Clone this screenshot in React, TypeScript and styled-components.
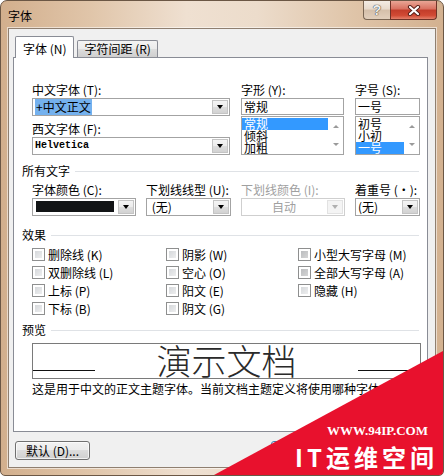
import styled, { createGlobalStyle } from "styled-components";

const GlobalStyle = createGlobalStyle`
  html, body { margin: 0; padding: 0; background: #fff; }
  body {
    font-family: "Noto Sans CJK SC", "Noto Sans", sans-serif;
    font-size: 12px;
    color: #000;
  }
  * { box-sizing: border-box; }
`;

const Window = styled.div`
  position: relative;
  width: 444px;
  height: 476px;
  border: 1px solid #6b5745;
  border-radius: 7px 7px 5px 5px;
  background: linear-gradient(90deg, #d2af8d 0%, #e0c5a9 20%, #efe0d1 42%, #ecdccb 58%, #dfc4a8 80%, #d3b190 100%);
  display: flex;
  flex-direction: column;
  overflow: hidden;
`;

const TitleBar = styled.div`
  height: 27px;
  display: flex;
  align-items: flex-start;
  padding: 0 6px 0 7px;
`;

const Title = styled.div`
  margin-top: 8px;
  line-height: 14px;
`;

const CaptionButtons = styled.div`
  margin-left: auto;
  display: flex;
`;

const HelpButton = styled.div`
  width: 27px;
  height: 19px;
  border: 1px solid #7a6654;
  border-top: none;
  border-right: none;
  border-radius: 0 0 0 4px;
  background: linear-gradient(#f4ece4 0%, #e8dacc 45%, #d5bfaa 50%, #e2cfbc 100%);
  display: flex;
  align-items: center;
  justify-content: center;
  font-family: "Liberation Sans", sans-serif;
  font-weight: bold;
  font-size: 14px;
  color: #eee;
  text-shadow: 0 0 1px #333, 0 0 1px #333;
`;

const CloseButton = styled.div`
  width: 47px;
  height: 19px;
  border: 1px solid #6e3328;
  border-top: none;
  border-radius: 0 0 4px 0;
  background: linear-gradient(#e9a595 0%, #d8705f 45%, #c23c2a 50%, #d14a34 80%, #e4806a 100%);
  display: flex;
  align-items: center;
  justify-content: center;
`;

const Client = styled.div`
  flex: 1;
  margin: 0 7px 7px;
  background: #f0f0f0;
  border: 1px solid #8f7f70;
  box-shadow: 0 0 0 1px rgba(255, 255, 255, 0.55);
  padding: 7px 7px 0 4px;
  display: flex;
  flex-direction: column;
`;

const TabStrip = styled.div`
  height: 21px;
  display: flex;
  align-items: flex-end;
  padding-left: 2px;
  position: relative;
  z-index: 1;
`;

const Tab = styled.div<{ $active?: boolean }>`
  height: ${(p) => (p.$active ? 22 : 17)}px;
  margin-bottom: ${(p) => (p.$active ? -1 : 0)}px;
  margin-left: ${(p) => (p.$active ? 0 : 3)}px;
  padding: ${(p) => (p.$active ? "4px 7px 0" : "1px 6px 0")};
  line-height: ${(p) => (p.$active ? 15 : 14)}px;
  border: 1px solid #898c95;
  border-bottom: none;
  border-radius: 2px 2px 0 0;
  background: ${(p) =>
    p.$active ? "#fff" : "linear-gradient(#f3f3f3, #ebebeb 50%, #dddddd 50%, #cfcfcf)"};
  white-space: nowrap;
`;

const Panel = styled.div`
  height: 375px;
  background: #fff;
  border: 1px solid #898c95;
  padding: 24px 6px 0 8px;
`;

const Indent = styled.div<{ $top?: number }>`
  margin-left: 10px;
  margin-top: ${(p) => p.$top ?? 0}px;
`;

const FontGrid = styled.div`
  display: grid;
  grid-template-columns: 198px 103px 65px;
  column-gap: 11px;
`;

const Column = styled.div`
  display: flex;
  flex-direction: column;
`;

const Label = styled.div<{ $disabled?: boolean; $top?: number }>`
  height: 15px;
  line-height: 15px;
  margin-bottom: 1px;
  margin-top: ${(p) => p.$top ?? 0}px;
  white-space: nowrap;
  color: ${(p) => (p.$disabled ? "#a0a0a0" : "#000")};
`;

const Combo = styled.div<{ $disabled?: boolean }>`
  height: 18px;
  border: 1px solid ${(p) => (p.$disabled ? "#cfcfcf" : "#a3a3a3")};
  background: #fff;
  display: flex;
  align-items: stretch;
`;

const ComboText = styled.div<{ $disabled?: boolean; $center?: boolean; $mono?: boolean }>`
  flex: 1;
  padding-left: ${(p) => (p.$center ? 0 : 2)}px;
  line-height: 16px;
  overflow: hidden;
  white-space: nowrap;
  text-align: ${(p) => (p.$center ? "center" : "left")};
  color: ${(p) => (p.$disabled ? "#a0a0a0" : "#000")};
  font-family: ${(p) => (p.$mono ? '"Liberation Mono", monospace' : "inherit")};
  font-size: ${(p) => (p.$mono ? 10 : 12)}px;
  font-weight: ${(p) => (p.$mono ? "bold" : "normal")};
`;

const Selected = styled.span`
  background: #74b1ee;
  padding: 0 1px;
`;

const Swatch = styled.div`
  flex: 1;
  margin: 2px 3px 3px 3px;
  background: #121416;
`;

const DropButton = styled.div<{ $disabled?: boolean }>`
  width: 16px;
  margin: 1px;
  border: 1px solid ${(p) => (p.$disabled ? "#e2e2e2" : "#c4c4c4")};
  background: ${(p) =>
    p.$disabled ? "#f4f4f4" : "linear-gradient(#f4f4f4, #ececec 50%, #dedede 50%, #d2d2d2)"};
  display: flex;
  align-items: center;
  justify-content: center;
  &::after {
    content: "";
    border-left: 3.5px solid transparent;
    border-right: 3.5px solid transparent;
    border-top: 4px solid ${(p) => (p.$disabled ? "#b0b0b0" : "#000")};
  }
`;

const TextBox = styled.div`
  height: 17px;
  border: 1px solid #a3a3a3;
  padding-left: 2px;
  line-height: 15px;
  background: #fff;
`;

const ListBox = styled.div`
  height: 39px;
  margin-top: 1px;
  border: 1px solid #a3a3a3;
  background: #fff;
  display: flex;
`;

const ListItems = styled.div`
  flex: 1;
  padding-top: 1px;
`;

const ListItem = styled.div<{ $selected?: boolean }>`
  height: 12px;
  line-height: 12px;
  padding-left: 2px;
  background: ${(p) => (p.$selected ? "#3399ff" : "transparent")};
  color: ${(p) => (p.$selected ? "#fff" : "#000")};
`;

const ScrollArrows = styled.div`
  width: 15px;
  display: flex;
  flex-direction: column;
  justify-content: space-between;
  align-items: center;
  padding: 8px 0 8px;
`;

const Arrow = styled.div<{ $up?: boolean }>`
  border-left: 3px solid transparent;
  border-right: 3px solid transparent;
  ${(p) => (p.$up ? "border-bottom" : "border-top")}: 3px solid #9a9a9a;
`;

const SectionHeader = styled.div<{ $top: number }>`
  margin-top: ${(p) => p.$top}px;
  height: 14px;
  line-height: 14px;
  display: flex;
  align-items: center;
  &::after {
    content: "";
    flex: 1;
    height: 1px;
    margin-left: 5px;
    margin-right: 2px;
    background: #dfe2e6;
  }
`;

const AllTextGrid = styled.div`
  display: grid;
  grid-template-columns: 104px 85px 104px 65px;
  column-gap: 10px;
`;

const EffectsGrid = styled.div`
  display: grid;
  grid-template-columns: 134px 132px 1fr;
  grid-template-rows: repeat(4, 18px);
  grid-auto-flow: column;
`;

const Check = styled.label`
  display: flex;
  align-items: center;
  gap: 3px;
  white-space: nowrap;
`;

const Box = styled.span<{ $dim?: boolean }>`
  width: 13px;
  height: 13px;
  border: 1px solid #8e8f8f;
  box-shadow: inset 0 0 0 2px #fff;
  background: ${(p) =>
    p.$dim
      ? "linear-gradient(135deg, #b4b6b9, #dcdcdc)"
      : "linear-gradient(135deg, #cfd2d6, #f4f4f4)"};
`;

const PreviewBox = styled.div`
  margin-top: 6px;
  height: 36px;
  border: 1px solid #7a7a7a;
  display: flex;
  overflow: hidden;
`;

const PreviewRule = styled.div`
  width: 62px;
  height: 1px;
  margin-top: 26px;
  border-top: 1.5px solid #111;
`;

const PreviewText = styled.div`
  flex: 1;
  text-align: center;
  font-size: 35px;
  line-height: 32px;
  font-weight: 300;
  color: #2a2a2a;
  letter-spacing: 0;
`;

const Description = styled.div`
  margin-top: 3px;
  line-height: 14px;
  white-space: nowrap;
`;

const ButtonRow = styled.div`
  margin-top: 9px;
  display: flex;
  gap: 7px;
  padding-left: 2px;
`;

const PushButton = styled.div<{ $default?: boolean; $push?: boolean }>`
  width: 75px;
  height: 19px;
  margin-left: ${(p) => (p.$push ? "auto" : 0)};
  border: 1px solid ${(p) => (p.$default ? "#3c7fb1" : "#707070")};
  border-radius: 3px;
  background: ${(p) =>
    p.$default
      ? "linear-gradient(#eaf6fd, #d9f0fc 50%, #bee6fd 50%, #a7d9f5)"
      : "linear-gradient(#f2f2f2, #ebebeb 50%, #dddddd 50%, #cfcfcf)"};
  box-shadow: inset 0 0 0 1px rgba(255, 255, 255, 0.7);
  line-height: 17px;
  text-align: center;
  white-space: nowrap;
`;

const Watermark = styled.div`
  position: absolute;
  right: 0;
  bottom: 0;
  width: 229px;
  height: 124px;
  background: #e8112d;
  clip-path: polygon(100% 0, 100% 100%, 0 100%);
  display: flex;
  flex-direction: column;
  align-items: flex-end;
  justify-content: flex-end;
  color: #fff;
`;

const WatermarkUrl = styled.div`
  font-family: "Liberation Serif", serif;
  font-weight: bold;
  font-size: 13px;
  line-height: 14px;
  margin-right: 15px;
`;

const WatermarkName = styled.div`
  font-family: "Noto Sans CJK SC", sans-serif;
  font-weight: bold;
  font-size: 24px;
  line-height: 26px;
  letter-spacing: 4px;
  margin: 6px 5px 5px 0;
`;

export default function App() {
  return (
    <>
      <GlobalStyle />
      <Window>
        <TitleBar>
          <Title>字体</Title>
          <CaptionButtons>
            <HelpButton>?</HelpButton>
            <CloseButton>
              <svg width="14" height="11" viewBox="0 0 14 11">
                <path d="M3 2 L11 9 M11 2 L3 9" stroke="#5a221a" strokeWidth="4.2" strokeLinecap="round" />
                <path d="M3 2 L11 9 M11 2 L3 9" stroke="#fff" strokeWidth="2.2" strokeLinecap="round" />
              </svg>
            </CloseButton>
          </CaptionButtons>
        </TitleBar>

        <Client>
          <TabStrip>
            <Tab $active>字体 (N)</Tab>
            <Tab>字符间距 (R)</Tab>
          </TabStrip>

          <Panel>
            <Indent>
              <FontGrid>
                <Column>
                  <Label>中文字体 (T):</Label>
                  <Combo>
                    <ComboText>
                      <Selected>+中文正文</Selected>
                    </ComboText>
                    <DropButton />
                  </Combo>
                  <Label $top={5}>西文字体 (F):</Label>
                  <Combo>
                    <ComboText $mono>Helvetica</ComboText>
                    <DropButton />
                  </Combo>
                </Column>

                <Column>
                  <Label>字形 (Y):</Label>
                  <TextBox>常规</TextBox>
                  <ListBox>
                    <ListItems>
                      <ListItem $selected>常规</ListItem>
                      <ListItem>倾斜</ListItem>
                      <ListItem>加粗</ListItem>
                    </ListItems>
                    <ScrollArrows>
                      <Arrow $up />
                      <Arrow />
                    </ScrollArrows>
                  </ListBox>
                </Column>

                <Column>
                  <Label>字号 (S):</Label>
                  <TextBox>一号</TextBox>
                  <ListBox>
                    <ListItems>
                      <ListItem>初号</ListItem>
                      <ListItem>小初</ListItem>
                      <ListItem $selected>一号</ListItem>
                    </ListItems>
                    <ScrollArrows>
                      <Arrow $up />
                      <Arrow />
                    </ScrollArrows>
                  </ListBox>
                </Column>
              </FontGrid>
            </Indent>

            <SectionHeader $top={9}>所有文字</SectionHeader>
            <Indent $top={4}>
              <AllTextGrid>
                <Column>
                  <Label>字体颜色 (C):</Label>
                  <Combo>
                    <Swatch />
                    <DropButton />
                  </Combo>
                </Column>
                <Column>
                  <Label>下划线线型 (U):</Label>
                  <Combo>
                    <ComboText>&nbsp;(无)</ComboText>
                    <DropButton />
                  </Combo>
                </Column>
                <Column>
                  <Label $disabled>下划线颜色 (I):</Label>
                  <Combo $disabled>
                    <ComboText $disabled $center>自动</ComboText>
                    <DropButton $disabled />
                  </Combo>
                </Column>
                <Column>
                  <Label>着重号 (·):</Label>
                  <Combo>
                    <ComboText>(无)</ComboText>
                    <DropButton />
                  </Combo>
                </Column>
              </AllTextGrid>
            </Indent>

            <SectionHeader $top={12}>效果</SectionHeader>
            <Indent $top={3}>
              <EffectsGrid>
                <Check><Box />删除线 (K)</Check>
                <Check><Box />双删除线 (L)</Check>
                <Check><Box />上标 (P)</Check>
                <Check><Box />下标 (B)</Check>
                <Check><Box />阴影 (W)</Check>
                <Check><Box />空心 (O)</Check>
                <Check><Box />阳文 (E)</Check>
                <Check><Box />阴文 (G)</Check>
                <Check><Box $dim />小型大写字母 (M)</Check>
                <Check><Box $dim />全部大写字母 (A)</Check>
                <Check><Box />隐藏 (H)</Check>
              </EffectsGrid>
            </Indent>

            <SectionHeader $top={6}>预览</SectionHeader>
            <Indent>
              <PreviewBox>
                <PreviewRule />
                <PreviewText>演示文档</PreviewText>
                <PreviewRule />
              </PreviewBox>
              <Description>这是用于中文的正文主题字体。当前文档主题定义将使用哪种字体。</Description>
            </Indent>
          </Panel>

          <ButtonRow>
            <PushButton>默认 (D)...</PushButton>
            <PushButton $default $push>确定</PushButton>
            <PushButton>取消</PushButton>
          </ButtonRow>
        </Client>

        <Watermark>
          <WatermarkUrl>WWW.94IP.COM</WatermarkUrl>
          <WatermarkName>IT运维空间</WatermarkName>
        </Watermark>
      </Window>
    </>
  );
}
